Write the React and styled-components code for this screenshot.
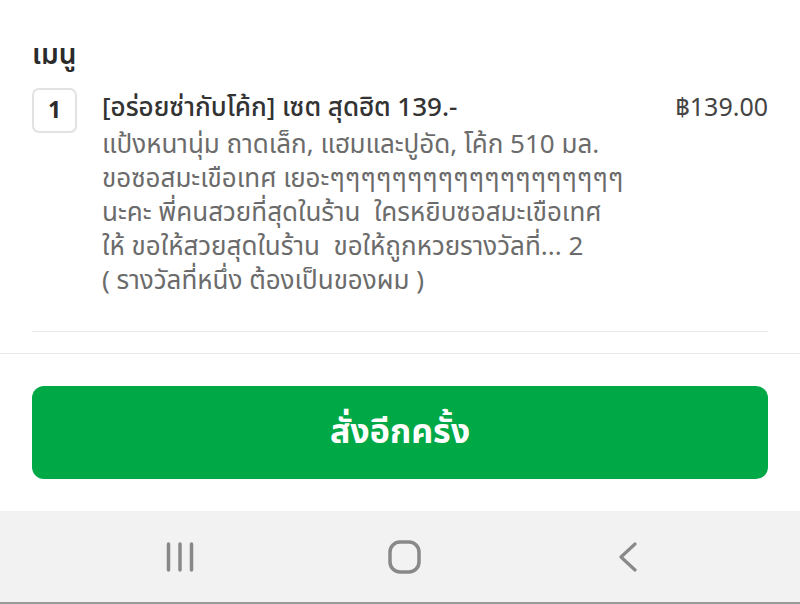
import React from "react";
import styled, { createGlobalStyle } from "styled-components";

const Global = createGlobalStyle`
  html, body { margin: 0; padding: 0; background: #ffffff; }
  body { font-family: "Noto Sans Thai", "Noto Sans Thai Looped", "Noto Sans", "DejaVu Sans", sans-serif; }
  * { box-sizing: border-box; }
`;

const Page = styled.div`
  width: 800px;
  height: 604px;
  display: flex;
  flex-direction: column;
  background: #fff;
  overflow: hidden;
`;

const Section = styled.section`
  padding: 38px 32px 0 32px;
`;

const Heading = styled.h2`
  margin: 0;
  font-size: 28px;
  font-weight: 600;
  color: #2b2b2b;
  line-height: 36px;
`;

const ItemRow = styled.div`
  display: flex;
  align-items: flex-start;
  margin-top: 14px;
  padding-bottom: 33px;
  border-bottom: 1px solid #e8e8e8;
`;

const Qty = styled.div`
  flex: none;
  width: 45px;
  height: 45px;
  border: 2px solid #e2e2e2;
  border-radius: 7px;
  display: flex;
  align-items: center;
  justify-content: center;
  font-size: 23px;
  font-weight: 700;
  color: #2b2b2b;
`;

const Body = styled.div`
  flex: 1;
  margin-left: 25px;
`;

const TitleRow = styled.div`
  display: flex;
  justify-content: space-between;
  align-items: baseline;
`;

const Title = styled.div`
  font-size: 26px;
  font-weight: 500;
  color: #333;
  line-height: 40px;
`;

const Price = styled.div`
  font-size: 25px;
  color: #444;
  line-height: 40px;
`;

const Desc = styled.div`
  font-size: 26px;
  color: #6b6b6b;
  line-height: 34px;
  white-space: pre-wrap;
`;

const Divider = styled.div`
  margin-top: 21px;
  height: 1px;
  background: #e8e8e8;
`;

const ButtonWrap = styled.div`
  padding: 32px 32px 0 32px;
`;

const ReorderButton = styled.button`
  width: 100%;
  height: 93px;
  border: none;
  border-radius: 12px;
  background: #00a846;
  color: #fff;
  font-family: inherit;
  font-size: 34px;
  font-weight: 700;
  cursor: pointer;
`;

const NavBar = styled.nav`
  margin-top: auto;
  height: 93px;
  background: #f2f2f2;
  border-bottom: 2px solid #9a9a9a;
  display: grid;
  grid-template-columns: repeat(3, 224px);
  align-items: center;
  justify-items: center;
  padding-left: 68px;
`;

const NavIcon = styled.svg`
  display: block;
`;

export default function App() {
  return (
    <Page>
      <Global />
      <Section>
        <Heading>เมนู</Heading>
        <ItemRow>
          <Qty>1</Qty>
          <Body>
            <TitleRow>
              <Title>[อร่อยซ่ากับโค้ก] เซต สุดฮิต 139.-</Title>
              <Price>฿139.00</Price>
            </TitleRow>
            <Desc>{`แป้งหนานุ่ม ถาดเล็ก, แฮมและปูอัด, โค้ก 510 มล.
ขอซอสมะเขือเทศ เยอะๆๆๆๆๆๆๆๆๆๆๆๆๆๆๆๆๆๆๆ
นะคะ พี่คนสวยที่สุดในร้าน  ใครหยิบซอสมะเขือเทศ
ให้ ขอให้สวยสุดในร้าน  ขอให้ถูกหวยรางวัลที่... 2
( รางวัลที่หนึ่ง ต้องเป็นของผม )`}</Desc>
          </Body>
        </ItemRow>
      </Section>
      <Divider />
      <ButtonWrap>
        <ReorderButton>สั่งอีกครั้ง</ReorderButton>
      </ButtonWrap>
      <NavBar>
        <NavIcon width="28" height="30" viewBox="0 0 28 30">
          <g stroke="#898989" strokeWidth="3.5" strokeLinecap="round">
            <line x1="2.5" y1="2" x2="2.5" y2="28" />
            <line x1="14" y1="2" x2="14" y2="28" />
            <line x1="25.5" y1="2" x2="25.5" y2="28" />
          </g>
        </NavIcon>
        <NavIcon width="33" height="34" viewBox="0 0 33 34">
          <rect x="2" y="2" width="29" height="30" rx="10" fill="none" stroke="#898989" strokeWidth="3.5" />
        </NavIcon>
        <NavIcon width="20" height="30" viewBox="0 0 20 30">
          <polyline points="17,2 3,15 17,28" fill="none" stroke="#898989" strokeWidth="3.2" strokeLinecap="round" strokeLinejoin="round" />
        </NavIcon>
      </NavBar>
    </Page>
  );
}
